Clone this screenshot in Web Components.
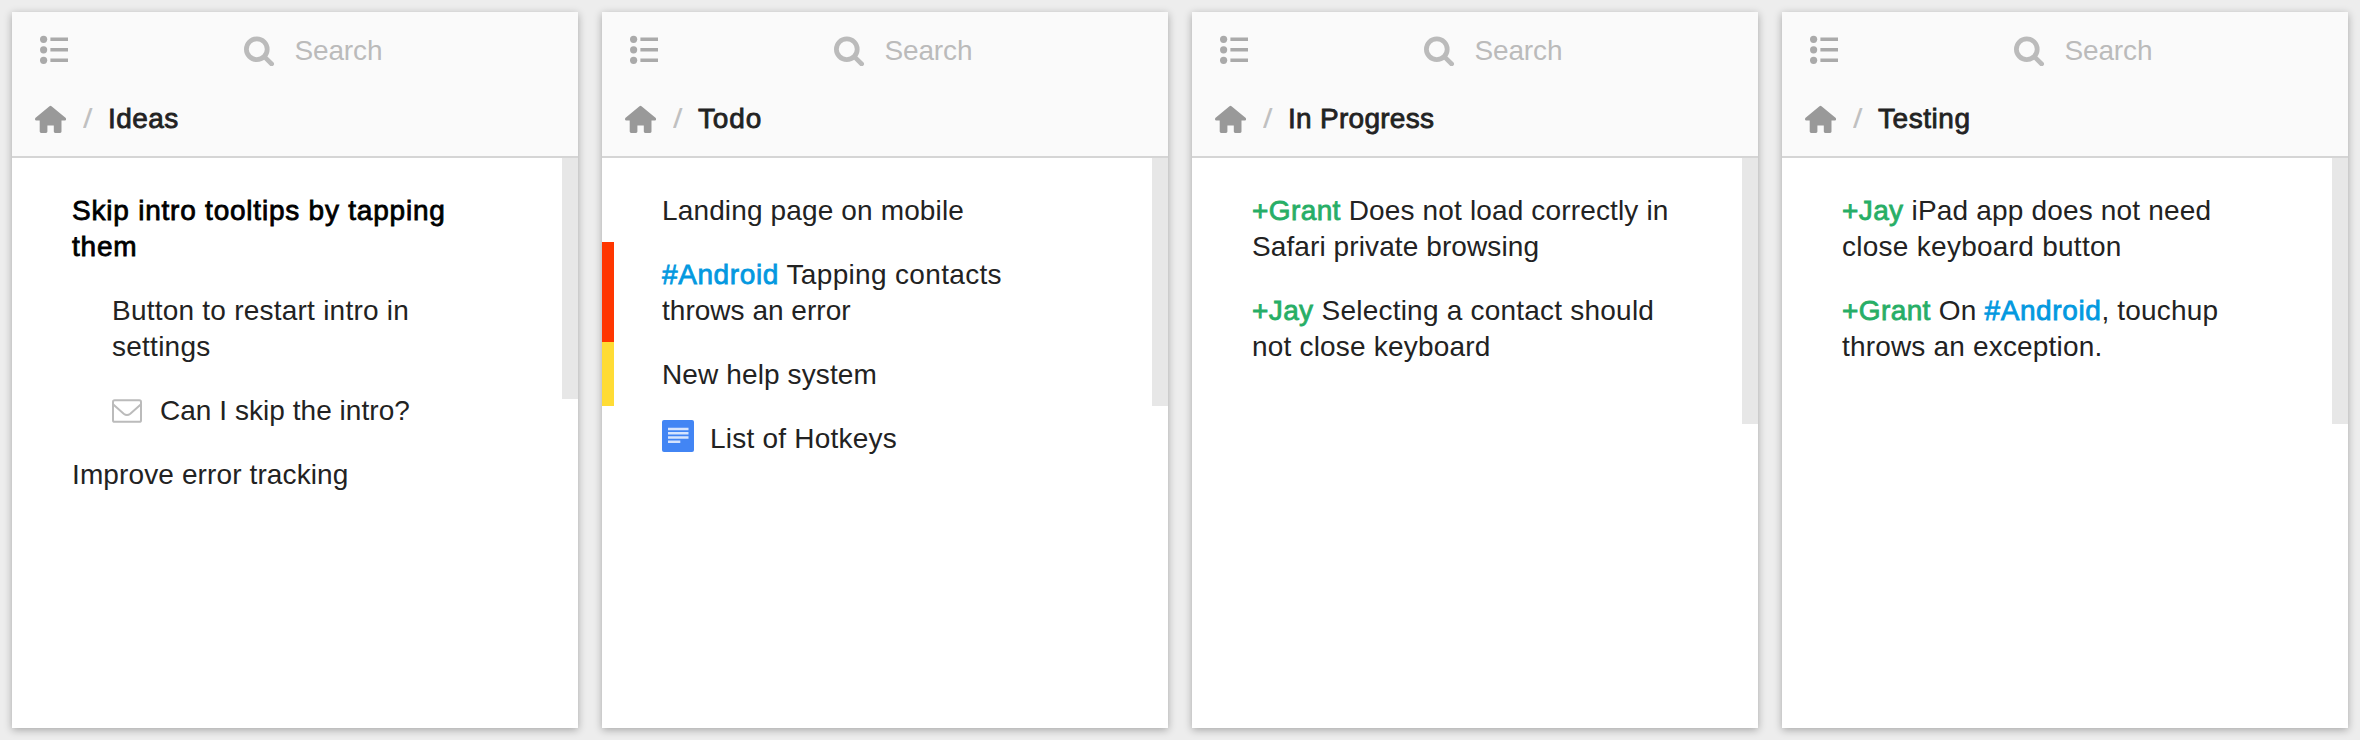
<!DOCTYPE html>
<html lang="en">
<head>
<meta charset="utf-8">
<title>Board</title>
<style>
html, body { margin: 0; height: 100%; }
body { background: #ededed; overflow: hidden; font: 28px/36px "Liberation Sans", Arial, sans-serif; color: #222; }
</style>
</head>
<body>
<outline-board>
  <outline-pane heading="Ideas" track=".45" scroll="241">
    <outline-item strong><text-line track=".78">Skip intro tooltips by tapping</text-line><text-line track=".8">them</text-line></outline-item>
    <outline-item nested><text-line track=".23">Button to restart intro in</text-line><text-line track=".25">settings</text-line></outline-item>
    <outline-item nested icon="mail"><text-line track=".04">Can I skip the intro?</text-line></outline-item>
    <outline-item><text-line track=".12">Improve error tracking</text-line></outline-item>
  </outline-pane>
  <outline-pane heading="Todo" track=".85" scroll="248">
    <outline-item><text-line track=".14">Landing page on mobile</text-line></outline-item>
    <outline-item flag="#ff3600"><text-line track=".33"><tag-link>#Android</tag-link> Tapping contacts</text-line><text-line track=".02">throws an error</text-line></outline-item>
    <outline-item flag="#ffdc35"><text-line track=".12">New help system</text-line></outline-item>
    <outline-item icon="doc"><text-line track=".22">List of Hotkeys</text-line></outline-item>
  </outline-pane>
  <outline-pane heading="In Progress" track=".28" scroll="266">
    <outline-item><text-line track=".15"><tag-link person>+Grant</tag-link> Does not load correctly in</text-line><text-line track=".1">Safari private browsing</text-line></outline-item>
    <outline-item><text-line track=".22"><tag-link person>+Jay</tag-link> Selecting a contact should</text-line><text-line track=".19">not close keyboard</text-line></outline-item>
  </outline-pane>
  <outline-pane heading="Testing" track=".55" scroll="266">
    <outline-item><text-line track=".18"><tag-link person>+Jay</tag-link> iPad app does not need</text-line><text-line track=".27">close keyboard button</text-line></outline-item>
    <outline-item><text-line track=".2"><tag-link person>+Grant</tag-link> On <tag-link>#Android</tag-link>, touchup</text-line><text-line track=".18">throws an exception.</text-line></outline-item>
  </outline-pane>
</outline-board>
<script>
const ICONS = {
  list: '<svg width="30" height="32" viewBox="0 0 30 32" fill="#aaa"><circle cx="3.6" cy="5.3" r="3.6"/><circle cx="3.6" cy="15.8" r="3.6"/><circle cx="3.6" cy="26.3" r="3.6"/><path d="M10.400 3.400H28v3.700H10.400zM10.400 13.900H28v3.700H10.400zM10.400 24.400H28v3.700H10.400z"/></svg>',
  search: '<svg width="32" height="32" viewBox="0 0 32 32" fill="none" stroke="#bbb"><circle cx="12.8" cy="15.2" r="10.4" stroke-width="4.8"/><path d="M21 23.4l6.7 6.6" stroke-width="4.6" stroke-linecap="round"/></svg>',
  home: '<svg width="32" height="30" viewBox="0 0 32 30" fill="#999"><path d="M14.5 1.3q1-.9 2 0L30.8 13q.8 1.9-.6 2.5h-3.7v11.1q0 1.4-1.4 1.4h-4.9q-1.4 0-1.4-1.4v-6.2h-6.4v6.2q0 1.4-1.4 1.4H6.1q-1.4 0-1.4-1.4V15.500H.9Q-.5 14.900.3 13z"/></svg>',
  mail: '<svg width="32" height="32" viewBox="0 0 32 32" fill="none" stroke="#bbb" stroke-width="2"><rect x="1" y="8.300" width="28" height="21.500" rx="1.600"/><path d="M1.300 12.500L11.700 21.700Q15 24.300 18.300 21.700L28.700 12.500"/></svg>',
  doc: '<svg width="32" height="32" viewBox="0 0 32 32"><rect width="32" height="32" rx="2" fill="#4285f4"/><path d="M6 7.800h20.500v2.500H6zM6 12h20.500v2.500H6zM6 16.200h20.500v2.500H6zM6 20.400h12.300v2.500H6z" fill="#d6e4fd"/></svg>'
};

customElements.define('outline-board', class extends HTMLElement {
  constructor() {
    super();
    this.attachShadow({ mode: 'open' }).innerHTML = `
      <style>:host { display: grid; grid-template-columns: repeat(4, 1fr); gap: 24px; padding: 12px; height: 740px; box-sizing: border-box; }</style>
      <slot></slot>`;
  }
});

customElements.define('outline-pane', class extends HTMLElement {
  connectedCallback() {
    this.attachShadow({ mode: 'open' }).innerHTML = `
      <style>
        :host { display: flex; flex-direction: column; background: #fff; box-shadow: 0 2px 8px rgba(0,0,0,.3); }
        svg { display: block; flex: none; }
        header { background: #fafafa; border-bottom: 2px solid #d5d5d5; height: 144px; }
        .tools { display: flex; align-items: center; height: 76px; padding-left: 28px; }
        .find { display: flex; align-items: center; margin-left: 174px; gap: 18.500px; color: #bbb; letter-spacing: -.15px; }
        .find span { padding-top: 2px; }
        .crumbs { display: flex; align-items: center; height: 62px; padding-left: 23px; }
        .home { padding-top: 2px; }
        .sep { margin-left: 16px; width: 25px; color: #c0c0c0; transform: scaleX(1.22); transform-origin: 0 50%; }
        .title { -webkit-text-stroke: .8px; }
        .body { display: flex; flex: 1; align-items: flex-start; }
        .items { flex: 1; padding-top: 20px; }
        .bar { width: 16px; background: #e7e7e7; }
      </style>
      <header>
        <div class="tools">${ICONS.list}<div class="find">${ICONS.search}<span>Search</span></div></div>
        <div class="crumbs"><div class="home">${ICONS.home}</div><span class="sep">/</span><span class="title"></span></div>
      </header>
      <div class="body"><div class="items"><slot></slot></div><div class="bar"></div></div>`;
    const title = this.shadowRoot.querySelector('.title');
    title.textContent = this.getAttribute('heading');
    title.style.letterSpacing = this.getAttribute('track') + 'px';
    this.shadowRoot.querySelector('.bar').style.height = this.getAttribute('scroll') + 'px';
  }
});

customElements.define('outline-item', class extends HTMLElement {
  connectedCallback() {
    this.attachShadow({ mode: 'open' }).innerHTML = `
      <style>
        :host { display: flex; padding: 14px 0 14px 48px; border-left: 12px solid var(--flag, transparent); }
        :host([nested]) { padding-left: 88px; }
        :host([strong]) { color: #000; -webkit-text-stroke: .8px; }
        .icon { width: 48px; height: 36px; }
        svg { display: block; }
      </style>
      ${this.hasAttribute('icon') ? `<div class="icon">${ICONS[this.getAttribute('icon')]}</div>` : ''}
      <div><slot></slot></div>`;
    if (this.hasAttribute('flag')) this.style.setProperty('--flag', this.getAttribute('flag'));
  }
});

customElements.define('text-line', class extends HTMLElement {
  connectedCallback() {
    this.attachShadow({ mode: 'open' }).innerHTML = '<style>:host { display: block; white-space: nowrap; transform: translateY(1px); }</style><slot></slot>';
    this.style.letterSpacing = this.getAttribute('track') + 'px';
  }
});

customElements.define('tag-link', class extends HTMLElement {
  constructor() {
    super();
    this.attachShadow({ mode: 'open' }).innerHTML = `
      <style>
        :host { display: inline; color: #0399e0; letter-spacing: .6px; -webkit-text-stroke: .8px; }
        :host([person]) { color: #27ae66; letter-spacing: .4px; }
      </style><slot></slot>`;
  }
});
</script>
</body>
</html>
